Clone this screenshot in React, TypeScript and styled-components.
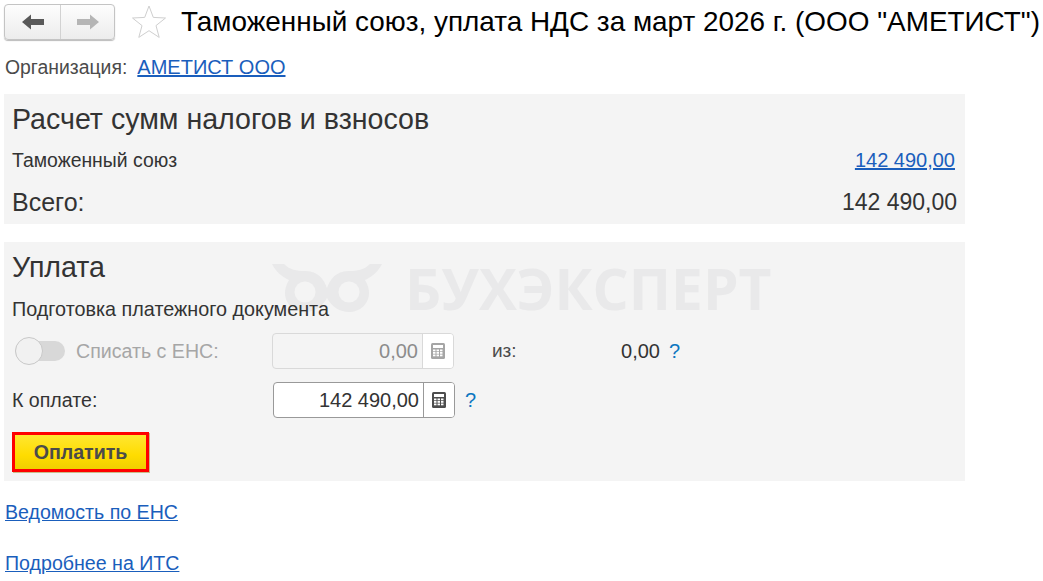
import * as React from 'react';
import styled, { createGlobalStyle } from 'styled-components';

const GlobalStyle = createGlobalStyle`
    html, body {
        margin: 0;
        padding: 0;
        background: #fff;
        overflow: hidden;
    }
    body {
        font-family: "Liberation Sans", Arial, sans-serif;
        color: #333;
    }`;

const Page = styled.div`
    width: 1043px;
    height: 581px;
    overflow: hidden;
    padding: 4px 0 0 4px;
    box-sizing: border-box;`;

const Header = styled.div`
    display: flex;
    align-items: center;
    height: 36px;
    white-space: nowrap;`;

const NavGroup = styled.div`
    display: flex;
    width: 111px;
    height: 36px;
    box-sizing: border-box;
    border: 1px solid #c4c4c4;
    border-radius: 4px;
    background: linear-gradient(#fdfdfd, #ececec);
    box-shadow: 0 1px 1px #bbb;`;

const NavButton = styled.div<{ $last?: boolean }>`
    flex: 0 0 ${p => (p.$last ? 54 : 55)}px;
    display: flex;
    align-items: center;
    justify-content: center;
    border-right: ${p => (p.$last ? 'none' : '1px solid #d2d2d2')};`;

const Star = styled.svg`
    margin-left: 16px;
    width: 36px;
    height: 36px;`;

const Title = styled.h1`
    margin: 0 0 0 14px;
    font-size: 27.9px;
    font-weight: 400;
    color: #000;
    line-height: 36px;`;

const OrgRow = styled.div`
    display: flex;
    align-items: center;
    gap: 10px;
    margin: 16px 0 0 1px;
    height: 22px;
    font-size: 19.4px;
    color: #4b4b4b;`;

const Link = styled.a<{ $size?: number }>`
    color: #1a5ebc;
    text-decoration: underline;
    font-size: ${p => p.$size || 20}px;`;

const Panel = styled.section`
    position: relative;
    width: 961px;
    box-sizing: border-box;
    background: #f4f4f4;
    padding: 9px 8px 0;`;

const CalcPanel = styled(Panel)`
    height: 130px;
    margin-top: 16px;`;

const PayPanel = styled(Panel)`
    height: 239px;
    margin-top: 18px;`;

const PanelTitle = styled.h2`
    position: relative;
    margin: 0;
    font-size: 28.6px;
    font-weight: 400;
    line-height: 32px;
    color: #333;`;

const SumRow = styled.div`
    display: flex;
    justify-content: space-between;
    align-items: center;
    margin-top: 13px;
    padding-right: 2px;
    font-size: 19.4px;
    line-height: 24px;
    color: #333;`;

const TotalRow = styled.div`
    display: flex;
    justify-content: space-between;
    align-items: center;
    margin-top: 16px;
    line-height: 28px;
    color: #333;`;

const TotalLabel = styled.span`
    font-size: 25px;`;

const TotalValue = styled.span`
    font-size: 23px;`;

const Subheading = styled.div`
    position: relative;
    margin-top: 14px;
    font-size: 19.8px;
    line-height: 24px;
    color: #333;`;

const FormRow = styled.div<{ $top: number }>`
    position: relative;
    display: flex;
    align-items: center;
    height: 36px;
    margin-top: ${p => p.$top}px;`;

const Toggle = styled.div`
    position: relative;
    flex: none;
    width: 50px;
    height: 20px;
    margin: 0 11px 0 3px;
    border-radius: 10px;
    background: #d8d8d8;`;

const Knob = styled.div`
    position: absolute;
    left: 0;
    top: -4px;
    width: 28px;
    height: 28px;
    box-sizing: border-box;
    border-radius: 50%;
    border: 1px solid #c8c8c8;
    background: #f1f1f1;`;

const FieldLabel = styled.div<{ $muted?: boolean; $width: number }>`
    flex: none;
    width: ${p => p.$width}px;
    font-size: 19.6px;
    white-space: nowrap;
    color: ${p => (p.$muted ? '#a6a6a6' : '#333')};`;

const Field = styled.div<{ $muted?: boolean }>`
    display: flex;
    flex: none;
    width: 182px;
    height: 36px;
    box-sizing: border-box;
    border: 1px solid ${p => (p.$muted ? '#d9d9d9' : '#999')};
    border-radius: 4px;
    background: ${p => (p.$muted ? '#f4f4f4' : '#fff')};
    overflow: hidden;`;

const FieldValue = styled.div<{ $muted?: boolean }>`
    flex: 1;
    text-align: right;
    padding-right: 4px;
    font-size: 20px;
    line-height: 34px;
    color: ${p => (p.$muted ? '#8c8c8c' : '#333')};`;

const CalcButton = styled.div<{ $muted?: boolean }>`
    flex: 0 0 30px;
    display: flex;
    align-items: center;
    justify-content: center;
    background: #fff;
    border-left: 1px solid ${p => (p.$muted ? '#d9d9d9' : '#999')};`;

const Help = styled.span<{ $left: number }>`
    margin-left: ${p => p.$left}px;
    font-size: 20px;
    color: #0c76c0;`;

const OfLabel = styled.div`
    flex: none;
    margin-left: 38px;
    width: 60px;
    font-size: 19px;
    color: #4b4b4b;`;

const OfValue = styled.div`
    flex: none;
    width: 108px;
    text-align: right;
    font-size: 20px;
    color: #333;`;

const PayButton = styled.button`
    position: relative;
    display: block;
    width: 137px;
    height: 40px;
    margin-top: 14px;
    border: 3px solid #f00;
    background: linear-gradient(#ffe631, #ffdc00 60%, #f0cf00);
    box-shadow: 1px 1px 0 #c9bd8a;
    font-family: inherit;
    font-size: 19.6px;
    font-weight: 700;
    color: #4b4b4b;
    padding: 0;`;

const BottomLink = styled.div<{ $top: number }>`
    margin: ${p => p.$top}px 0 0 1px;
    height: 24px;`;

const Watermark = styled.div`
    position: absolute;
    left: 267px;
    top: 14px;
    display: flex;
    align-items: center;
    gap: 22px;
    color: #e9e9ea;
    pointer-events: none;`;

const WatermarkText = styled.span`
    font-family: "Open Sans", sans-serif;
    font-size: 56.8px;
    font-weight: 700;
    line-height: 64px;
    white-space: nowrap;`;

const CalcIcon = ({ color }: { color: string }) => (
    <svg width="14" height="16" viewBox="0 0 14 16">
        <rect x="0" y="0" width="14" height="16" rx="1.5" fill={color} />
        <rect x="2" y="2" width="10" height="3" fill="#fff" />
        {[6.5, 9, 11.5].map(y =>
            [2, 5.5, 9].map(x => <rect key={`${x}-${y}`} x={x} y={y} width="2.5" height="1.8" fill="#fff" />)
        )}
    </svg>
);

const Arrow = ({ color, flip }: { color: string; flip?: boolean }) => (
    <svg width="22" height="16" viewBox="0 0 22 16" transform={flip ? 'scale(-1 1)' : undefined}>
        <path d="M0 8 L9 0.5 V5 H22 V11 H9 V15.5 Z" fill={color} />
    </svg>
);

const BrandMark = () => (
    <svg width="112" height="50" viewBox="0 0 112 50">
        <path d="M1 1 H13 C19 7 26 8 33 8 C46 7 53 16 56 25 C59 16 66 7 79 8 C86 8 93 7 99 1 H111 C106 11 98 15 94 17 C97 22 98 26 98 30 C98 41 89 49 78 49 C69 49 61 44 56 35 C51 44 43 49 34 49 C23 49 14 41 14 30 C14 26 15 22 18 17 C14 15 6 11 1 1 Z" fill="#e9e9ea" />
        <circle cx="34" cy="29" r="10.5" fill="#f4f4f4" />
        <circle cx="78" cy="29" r="10.5" fill="#f4f4f4" />
    </svg>
);

export default function App() {
    return (
        <Page>
            <GlobalStyle />
            <Header>
                <NavGroup>
                    <NavButton><Arrow color="#595959" /></NavButton>
                    <NavButton $last><Arrow color="#b5b5b5" flip /></NavButton>
                </NavGroup>
                <Star viewBox="0 0 36 36">
                    <path d="M18 2 L22.3 13.4 L34.5 14 L25 21.6 L28.2 33.4 L18 26.7 L7.8 33.4 L11 21.6 L1.5 14 L13.7 13.4 Z" fill="#fff" stroke="#cfcfcf" strokeWidth="1" />
                </Star>
                <Title>Таможенный союз, уплата НДС за март 2026 г. (ООО "АМЕТИСТ")</Title>
            </Header>
            <OrgRow>
                <span>Организация:</span>
                <Link>АМЕТИСТ ООО</Link>
            </OrgRow>
            <CalcPanel>
                <PanelTitle>Расчет сумм налогов и взносов</PanelTitle>
                <SumRow>
                    <span>Таможенный союз</span>
                    <Link>142 490,00</Link>
                </SumRow>
                <TotalRow>
                    <TotalLabel>Всего:</TotalLabel>
                    <TotalValue>142 490,00</TotalValue>
                </TotalRow>
            </CalcPanel>
            <PayPanel>
                <Watermark>
                    <BrandMark />
                    <WatermarkText>БУХЭКСПЕРТ</WatermarkText>
                </Watermark>
                <PanelTitle>Уплата</PanelTitle>
                <Subheading>Подготовка платежного документа</Subheading>
                <FormRow $top={12}>
                    <Toggle><Knob /></Toggle>
                    <FieldLabel $muted $width={196}>Списать с ЕНС:</FieldLabel>
                    <Field $muted>
                        <FieldValue $muted>0,00</FieldValue>
                        <CalcButton $muted><CalcIcon color="#a5a5a5" /></CalcButton>
                    </Field>
                    <OfLabel>из:</OfLabel>
                    <OfValue>0,00</OfValue>
                    <Help $left={9}>?</Help>
                </FormRow>
                <FormRow $top={13}>
                    <FieldLabel $width={261}>К оплате:</FieldLabel>
                    <Field>
                        <FieldValue>142 490,00</FieldValue>
                        <CalcButton><CalcIcon color="#4d4d4d" /></CalcButton>
                    </Field>
                    <Help $left={10}>?</Help>
                </FormRow>
                <PayButton>Оплатить</PayButton>
            </PayPanel>
            <BottomLink $top={20}><Link $size={19.6}>Ведомость по ЕНС</Link></BottomLink>
            <BottomLink $top={27}><Link $size={19.6}>Подробнее на ИТС</Link></BottomLink>
        </Page>
    );
}
